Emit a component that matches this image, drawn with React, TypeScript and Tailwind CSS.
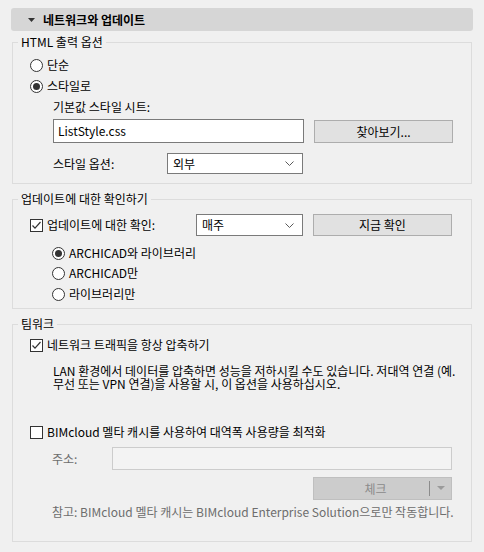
import React from 'react';

// Small Windows-style form controls used in the preferences panel

const Radio = ({ checked, label }: { checked?: boolean; label: string }) => (
  <div className="flex items-center h-[20px]">
    <span className="w-[13px] h-[13px] rounded-full border border-[#333333] bg-white flex items-center justify-center shrink-0">
      {checked && <span className="w-[7px] h-[7px] rounded-full bg-[#333333]" />}
    </span>
    <span className="ml-[4px] whitespace-nowrap">{label}</span>
  </div>
);

const Checkbox = ({ checked, label }: { checked?: boolean; label: string }) => (
  <div className="flex items-center">
    <span className="w-[13px] h-[13px] border border-[#333333] bg-white flex items-center justify-center shrink-0">
      {checked && (
        <svg width="11" height="11" viewBox="0 0 11 11">
          <polyline points="1.5,5.5 4,8.2 9.5,2" fill="none" stroke="#333333" strokeWidth="1.2" />
        </svg>
      )}
    </span>
    <span className="ml-[4px] whitespace-nowrap">{label}</span>
  </div>
);

const Chevron = () => (
  <svg width="9" height="5" viewBox="0 0 9 5" className="shrink-0">
    <polyline points="0.5,0.5 4.5,4.5 8.5,0.5" fill="none" stroke="#5a5a5a" strokeWidth="1" />
  </svg>
);

const Select = ({ value, className }: { value: string; className: string }) => (
  <div className={`flex items-center justify-between bg-white border border-[#7a7a7a] pl-[5px] pr-[8px] ${className}`}>
    <span>{value}</span>
    <Chevron />
  </div>
);

const Button = ({ label, className }: { label: string; className: string }) => (
  <div className={`flex items-center justify-center bg-[#e1e1e1] border border-[#adadad] w-[139px] ${className}`}>
    {label}
  </div>
);

const GroupBox = ({ title, className, children }: { title: string; className?: string; children: React.ReactNode }) => (
  <fieldset className={`mx-[12px] border border-[#dcdcdc] ${className ?? ''}`}>
    <legend className="ml-[5px] px-[3px] leading-[14px]">{title}</legend>
    {children}
  </fieldset>
);

export default function App() {
  return (
    <div className="w-[484px] h-[552px] bg-[#f0f0f0] text-[12px] leading-[14px] text-black font-['Malgun_Gothic','Noto_Sans_CJK_KR',sans-serif] overflow-hidden">
      <div className="pt-[8px]">
        {/* Section header */}
        <div className="mx-[11px] h-[23px] bg-[#d6d6d6] rounded-[3px] flex items-center">
          <svg width="7" height="4" viewBox="0 0 7 4" className="ml-[17px]">
            <polygon points="0,0 7,0 3.5,4" fill="#333333" />
          </svg>
          <span className="ml-[8px] font-bold">네트워크와 업데이트</span>
        </div>

        {/* HTML output */}
        <GroupBox title="HTML 출력 옵션" className="mt-[4px]">
          <div className="pl-[17px] pt-[6px] pb-[9px]">
            <Radio label="단순" />
            <div className="mt-px">
              <Radio checked label="스타일로" />
            </div>
            <div className="pl-[23px]">
              <div className="h-[21px] flex items-center">기본값 스타일 시트:</div>
              <div className="flex mt-[2px]">
                <div className="w-[251px] h-[24px] bg-white border border-[#7a7a7a] flex items-center pl-[4px]">
                  ListStyle.css
                </div>
                <Button label="찾아보기..." className="ml-[10px] mt-px h-[23px]" />
              </div>
              <div className="flex items-center mt-[10px]">
                <span className="w-[114px]">스타일 옵션:</span>
                <Select value="외부" className="w-[136px] h-[21px]" />
              </div>
            </div>
          </div>
        </GroupBox>

        {/* Updates */}
        <GroupBox title="업데이트에 대한 확인하기" className="mt-[8px]">
          <div className="pl-[17px] pt-[8px] pb-[4px]">
            <div className="flex items-center h-[22px]">
              <div className="w-[166px]">
                <Checkbox checked label="업데이트에 대한 확인:" />
              </div>
              <Select value="매주" className="w-[107px] h-[22px]" />
              <Button label="지금 확인" className="ml-[10px] h-[22px]" />
            </div>
            <div className="pl-[22px] mt-[7px]">
              <Radio checked label="ARCHICAD와 라이브러리" />
              <Radio label="ARCHICAD만" />
              <div className="mt-px">
                <Radio label="라이브러리만" />
              </div>
            </div>
          </div>
        </GroupBox>

        {/* Teamwork */}
        <GroupBox title="팀워크" className="mt-[8px]">
          <div className="pl-[17px] pt-[4px] pb-[22px]">
            <div className="h-[20px] flex items-center">
              <Checkbox checked label="네트워크 트래픽을 항상 압축하기" />
            </div>
            <p className="pl-[23px] mt-[9px] leading-[13px] whitespace-nowrap">
              LAN 환경에서 데이터를 압축하면 성능을 저하시킬 수도 있습니다. 저대역 연결 (예.
              <br />
              무선 또는 VPN 연결)을 사용할 시, 이 옵션을 사용하십시오.
            </p>
            <div className="h-[20px] flex items-center mt-[32px]">
              <Checkbox label="BIMcloud 멜타 캐시를 사용하여 대역폭 사용량을 최적화" />
            </div>
            <div className="pl-[22px] mt-[5px] flex items-center">
              <span className="w-[60px] text-[#6d6d6d]">주소:</span>
              <div className="w-[340px] h-[23px] border border-[#cccccc] bg-[#f3f3f3]" />
            </div>
            <div className="flex justify-end mt-[7px] pr-[19px]">
              <div className="w-[139px] h-[23px] bg-[#cccccc] border border-[#bfbfbf] flex items-center text-[#8a8a8a]">
                <span className="flex-1 text-center pl-[8px]">체크</span>
                <span className="w-px h-[15px] bg-[#8c8c8c]" />
                <span className="w-[21px] flex justify-center">
                  <svg width="8" height="5" viewBox="0 0 8 5">
                    <polygon points="0,0 8,0 4,4" fill="#9a9a9a" />
                  </svg>
                </span>
              </div>
            </div>
            <p className="pl-[22px] mt-[5px] text-[#6d6d6d] whitespace-nowrap">
              참고: BIMcloud 멜타 캐시는 BIMcloud Enterprise Solution으로만 작동합니다.
            </p>
          </div>
        </GroupBox>
      </div>
    </div>
  );
}
